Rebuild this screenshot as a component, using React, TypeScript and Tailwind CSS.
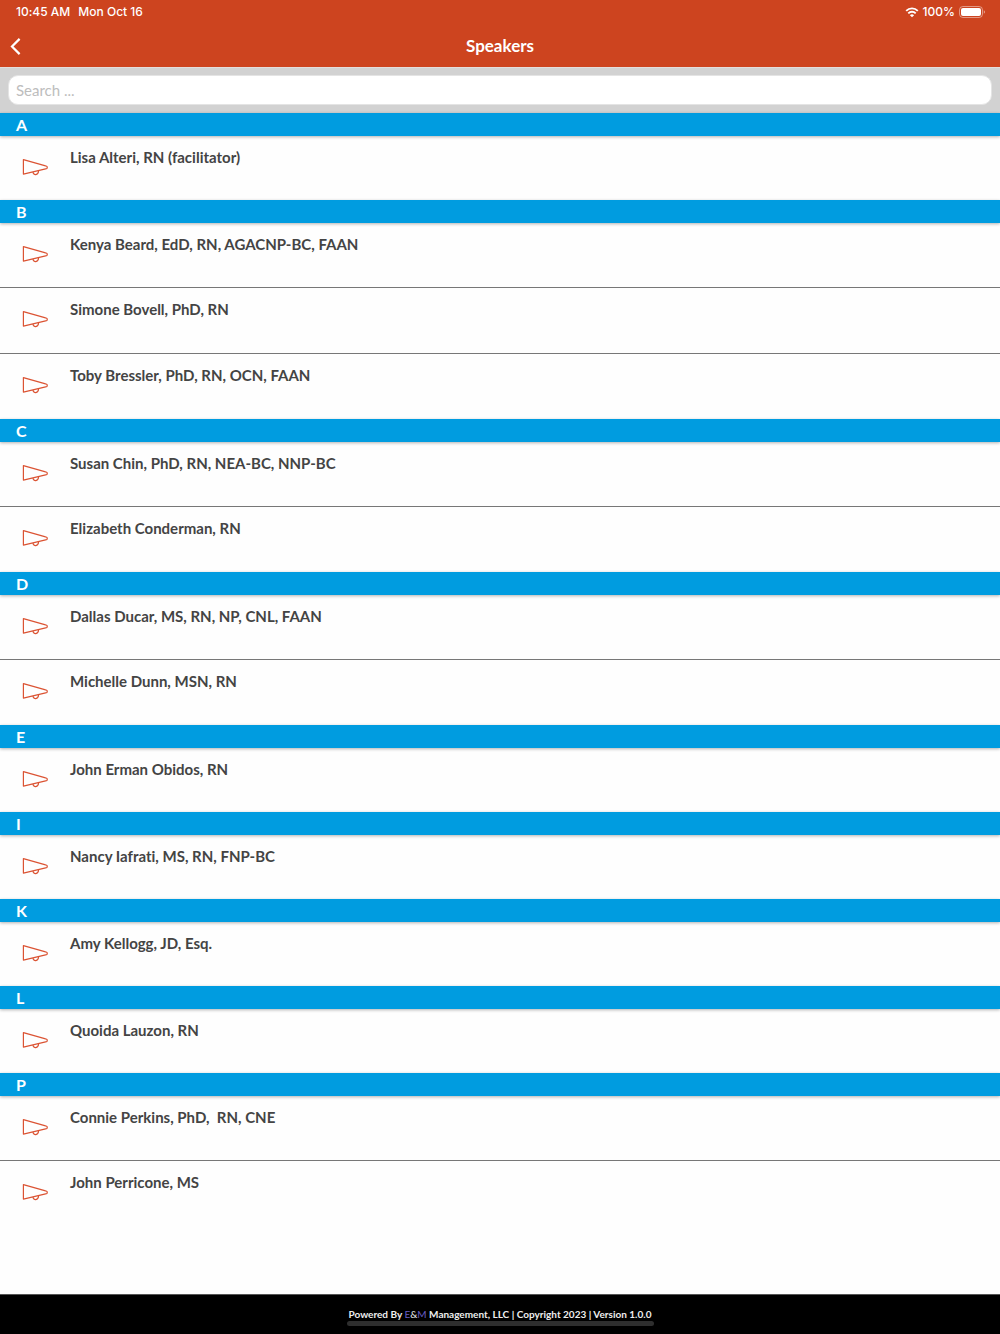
type Group = {
  letter: string;
  speakers: string[];
};

const groups: Group[] = [
  { letter: "A", speakers: ["Lisa Alteri, RN (facilitator)"] },
  {
    letter: "B",
    speakers: [
      "Kenya Beard, EdD, RN, AGACNP-BC, FAAN",
      "Simone Bovell, PhD, RN",
      "Toby Bressler, PhD, RN, OCN, FAAN",
    ],
  },
  {
    letter: "C",
    speakers: ["Susan Chin, PhD, RN, NEA-BC, NNP-BC", "Elizabeth Conderman, RN"],
  },
  {
    letter: "D",
    speakers: ["Dallas Ducar, MS, RN, NP, CNL, FAAN", "Michelle Dunn, MSN, RN"],
  },
  { letter: "E", speakers: ["John Erman Obidos, RN"] },
  { letter: "I", speakers: ["Nancy Iafrati, MS, RN, FNP-BC"] },
  { letter: "K", speakers: ["Amy Kellogg, JD, Esq."] },
  { letter: "L", speakers: ["Quoida Lauzon, RN"] },
  { letter: "P", speakers: ["Connie Perkins, PhD,  RN, CNE", "John Perricone, MS"] },
];

function MegaphoneIcon() {
  return (
    <svg
      className="h-5 w-7 shrink-0 text-[#db5333]"
      viewBox="0 0 28 20"
      fill="none"
      stroke="currentColor"
      strokeWidth="1.2"
      strokeLinejoin="round"
      aria-hidden="true"
    >
      <path d="M1.4 2.6 L23.6 8.8 Q25.2 9.2 25.2 9.8 V10.9 Q25.2 11.5 23.6 11.9 L1.4 17.1 Z" />
      <path d="M11 15 C11.2 18.6 16.4 18.6 16.6 13.8" />
    </svg>
  );
}

function WifiIcon() {
  return (
    <svg className="h-3 w-[14px]" viewBox="0 0 14 12" fill="none" stroke="currentColor" aria-hidden="true">
      <path d="M1.2 4.8 a8.2 8.2 0 0 1 11.6 0" strokeWidth="1.9" />
      <path d="M3.3 7.3 a5.2 5.2 0 0 1 7.4 0" strokeWidth="1.9" />
      <path d="M7 11.3 L4.9 9.2 a3 3 0 0 1 4.2 0 Z" fill="currentColor" stroke="none" />
    </svg>
  );
}

function BatteryIcon() {
  return (
    <svg className="h-3 w-[26px]" viewBox="0 0 26 12" fill="none" aria-hidden="true">
      <rect x="0.5" y="0.5" width="23" height="11" rx="3.4" stroke="#fff" strokeOpacity="0.45" />
      <rect x="2" y="2" width="20" height="8" rx="2" fill="#fff" />
      <path d="M24.8 4.3 Q26 5 26 6 Q26 7 24.8 7.7 Z" fill="#fff" fillOpacity="0.5" />
    </svg>
  );
}

function StatusBar() {
  return (
    <div className="flex h-6 items-center justify-between pl-4 pr-[15px] font-['Inter',sans-serif] text-xs font-medium">
      <div className="flex gap-2">
        <span>10:45 AM</span>
        <span>Mon Oct 16</span>
      </div>
      <div className="flex items-center gap-1">
        <WifiIcon />
        <span>100%</span>
        <BatteryIcon />
      </div>
    </div>
  );
}

function TitleBar() {
  return (
    <div className="grid h-[43px] grid-cols-[1fr_auto_1fr] items-center">
      <button type="button" aria-label="Back" className="w-8 pl-[9px]">
        <svg className="h-[18px] w-3" viewBox="0 0 12 18" fill="none" stroke="currentColor" strokeWidth="2.2" aria-hidden="true">
          <path d="M10.6 1.9 L3 9.5 L10.6 17.1" />
        </svg>
      </button>
      <h1 className="text-[17px] font-bold leading-6">Speakers</h1>
    </div>
  );
}

export default function App() {
  return (
    <div className="flex min-h-screen flex-col bg-[#fefefe] font-['Lato',sans-serif] text-[#444] [font-variant-ligatures:none] [text-rendering:optimizeLegibility]">
      <header className="bg-[#cd441f] text-white">
        <StatusBar />
        <TitleBar />
      </header>

      <div className="border-t border-[#e4dedc] bg-[#d2d2d2] px-2 pb-2 pt-[7px]">
        <input
          type="search"
          aria-label="Search speakers"
          placeholder="Search ..."
          className="block h-[30px] w-full rounded-[10px] border border-[#e4e4e4] bg-white px-[7px] text-[15px] outline-none placeholder:text-[#bdbdbd]"
        />
      </div>

      <main className="flex-1">
        {groups.map((group) => (
          <section key={group.letter}>
            <h2 className="h-[23px] bg-[#009ce0] px-4 text-base font-bold leading-[23px] text-white shadow-[0_1px_3px_rgba(0,0,0,0.3)]">
              {group.letter}
            </h2>
            <ul>
              {group.speakers.map((name) => (
                <li
                  key={name}
                  className="h-16 not-first:h-[66px] not-first:border-t not-first:border-[#777]"
                >
                  <a href="#" className="flex h-full gap-5 pl-[22px] pr-4 pt-[11px]">
                    <span className="pt-[10px]">
                      <MegaphoneIcon />
                    </span>
                    <span className="whitespace-pre text-[15px] font-bold leading-5">{name}</span>
                  </a>
                </li>
              ))}
            </ul>
          </section>
        ))}
      </main>

      <footer className="flex h-10 flex-col items-center border-t border-[#555] bg-black pt-3 text-[10px] font-bold leading-[14px] text-[#eee]">
        <p>
          Powered By{" "}
          <a href="#" className="font-normal text-[#6a5fc4]">
            E<span className="text-[#eee]">&amp;</span>M
          </a>{" "}
          Management, LLC | Copyright 2023 | Version 1.0.0
        </p>
        <div className="h-[5px] w-[307px] rounded-full bg-[#2e2e2e]" />
      </footer>
    </div>
  );
}
